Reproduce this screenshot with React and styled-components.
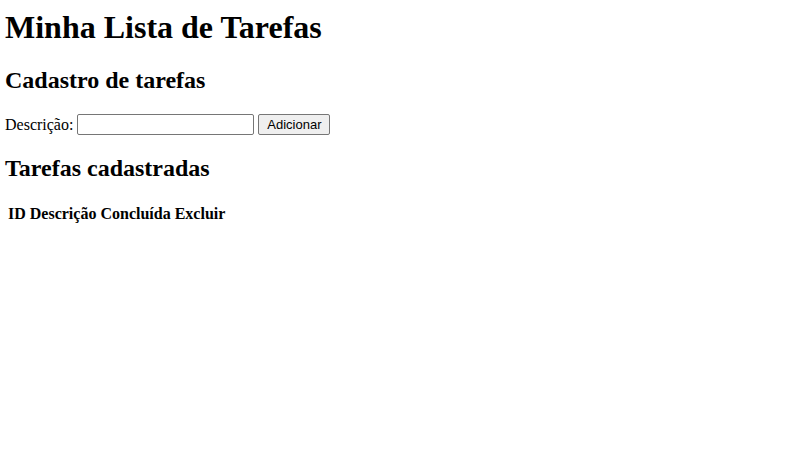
import React from "react";
import styled, { createGlobalStyle } from "styled-components";

const GlobalStyle = createGlobalStyle`
  body {
    margin: 0;
    background: #ffffff;
    color: #000000;
    font-family: "Liberation Serif", "Times New Roman", serif;
    font-size: 16px;
  }
`;

const Page = styled.main`
  padding: 9px 5px;
`;

const Title = styled.h1`
  margin: 0 0 20px;
  font-size: 32px;
  line-height: 37px;
`;

const Subtitle = styled.h2`
  margin: 0 0 20px;
  font-size: 24px;
  line-height: 28px;
`;

const TaskForm = styled.form`
  display: flex;
  align-items: center;
  gap: 4px;
  margin-bottom: 19px;
`;

const Label = styled.label`
  line-height: 18px;
`;

const TextInput = styled.input`
  box-sizing: border-box;
  width: 177px;
  height: 21px;
  padding: 1px 2px;
  border: 1px solid #767676;
  border-radius: 2px;
  background: #ffffff;
  font: 13px "Liberation Sans", Arial, sans-serif;
`;

const AddButton = styled.button`
  box-sizing: border-box;
  height: 21px;
  width: 72px;
  padding: 0;
  border: 1px solid #767676;
  border-radius: 2px;
  background: #efefef;
  color: #000000;
  font: 13px "Liberation Sans", Arial, sans-serif;
`;

const TaskTable = styled.table`
  border-spacing: 2px;
`;

const HeaderCell = styled.th`
  padding: 1px;
  font-size: 16px;
  line-height: 18px;
  text-align: center;
`;

const columns = ["ID", "Descrição", "Concluída", "Excluir"];

export default function App() {
  return (
    <>
      <GlobalStyle />
      <Page>
        <Title>Minha Lista de Tarefas</Title>
        <Subtitle>Cadastro de tarefas</Subtitle>
        <TaskForm onSubmit={(event) => event.preventDefault()}>
          <Label htmlFor="descricao">Descrição:</Label>
          <TextInput id="descricao" name="descricao" type="text" />
          <AddButton type="submit">Adicionar</AddButton>
        </TaskForm>
        <Subtitle>Tarefas cadastradas</Subtitle>
        <TaskTable>
          <thead>
            <tr>
              {columns.map((column) => (
                <HeaderCell key={column} scope="col">{column}</HeaderCell>
              ))}
            </tr>
          </thead>
        </TaskTable>
      </Page>
    </>
  );
}
